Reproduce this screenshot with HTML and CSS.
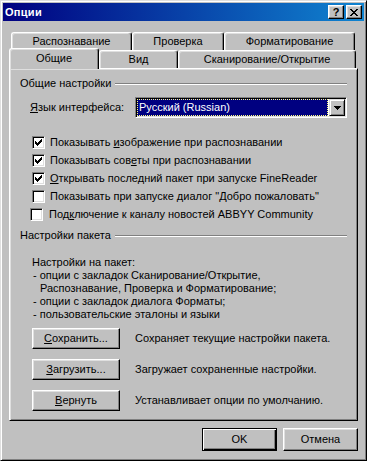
FILE: index.html
```html
<!DOCTYPE html>
<html lang="ru">
<head>
    <meta charset="UTF-8">
    <title>Опции</title>
    <link rel="stylesheet" href="styles.css">
</head>
<body>

<div class="window">
    <div class="titlebar">
        <span class="title">Опции</span>
        <div class="title-buttons">
            <span class="tbtn tbtn-help">?</span>
            <span class="tbtn">
                <svg width="8" height="7" viewBox="0 0 8 7" shape-rendering="crispEdges"><path d="M0 0h2v1h-2z M6 0h2v1h-2z M1 1h2v1h-2z M5 1h2v1h-2z M2 2h4v1h-4z M3 3h2v1h-2z M2 4h4v1h-4z M1 5h2v1h-2z M5 5h2v1h-2z M0 6h2v1h-2z M6 6h2v1h-2z" fill="#000"/></svg>
            </span>
        </div>
    </div>

    <div class="dialog-body">
        <div class="tab-row tab-row-back">
            <div class="tab tab-recog">Распознавание</div>
            <div class="tab tab-check">Проверка</div>
            <div class="tab tab-format">Форматирование</div>
        </div>
        <div class="tab-row tab-row-front">
            <div class="tab tab-general active">Общие</div>
            <div class="tab tab-view">Вид</div>
            <div class="tab tab-scan">Сканирование/Открытие</div>
        </div>

        <div class="panel">
            <div class="group-title">
                <span>Общие настройки</span>
                <span class="etched"></span>
            </div>

            <div class="lang-row">
                <span class="lang-label"><u>Я</u>зык интерфейса:</span>
                <div class="combo">
                    <span class="combo-value">Русский (Russian)</span>
                    <span class="combo-btn">
                        <svg width="7" height="4" viewBox="0 0 7 4" shape-rendering="crispEdges"><path d="M0 0h7v1h-1v1h-1v1h-1v1h-1v-1h-1v-1h-1v-1h-1z" fill="#000"/></svg>
                    </span>
                </div>
            </div>

            <div class="checks">
                <div class="check-row">
                    <span class="checkbox checked"><svg width="7" height="7" viewBox="0 0 7 7" shape-rendering="crispEdges"><path d="M0 2h1v3h-1z M1 3h1v3h-1z M2 4h1v3h-1z M3 3h1v3h-1z M4 2h1v3h-1z M5 1h1v3h-1z M6 0h1v3h-1z" fill="#000"/></svg></span>
                    <span>Показывать <u>и</u>зображение при распознавании</span>
                </div>
                <div class="check-row">
                    <span class="checkbox checked"><svg width="7" height="7" viewBox="0 0 7 7" shape-rendering="crispEdges"><path d="M0 2h1v3h-1z M1 3h1v3h-1z M2 4h1v3h-1z M3 3h1v3h-1z M4 2h1v3h-1z M5 1h1v3h-1z M6 0h1v3h-1z" fill="#000"/></svg></span>
                    <span>Показывать сов<u>е</u>ты при распознавании</span>
                </div>
                <div class="check-row">
                    <span class="checkbox checked"><svg width="7" height="7" viewBox="0 0 7 7" shape-rendering="crispEdges"><path d="M0 2h1v3h-1z M1 3h1v3h-1z M2 4h1v3h-1z M3 3h1v3h-1z M4 2h1v3h-1z M5 1h1v3h-1z M6 0h1v3h-1z" fill="#000"/></svg></span>
                    <span><u>О</u>ткрывать последний пакет при запуске FineReader</span>
                </div>
                <div class="check-row">
                    <span class="checkbox"></span>
                    <span>Показывать при запуске диалог "<u>Д</u>обро пожаловать"</span>
                </div>
                <div class="check-row check-row-shift">
                    <span class="checkbox"></span>
                    <span>Под<u>к</u>лючение к каналу новостей ABBYY Community</span>
                </div>
            </div>

            <div class="group-title group-title-2">
                <span>Настройки пакета</span>
                <span class="etched"></span>
            </div>

            <div class="note">
                <div>Настройки на пакет:</div>
                <div class="note-item">- опции с закладок Сканирование/Открытие,</div>
                <div class="note-cont">Распознавание, Проверка и Форматирование;</div>
                <div class="note-item">- опции с закладок диалога Форматы;</div>
                <div class="note-item">- пользовательские эталоны и языки</div>
            </div>

            <div class="action-row">
                <span class="btn btn-action"><u>С</u>охранить...</span>
                <span>Сохраняет текущие настройки пакета.</span>
            </div>
            <div class="action-row">
                <span class="btn btn-action"><u>З</u>агрузить...</span>
                <span>Загружает сохраненные настройки.</span>
            </div>
            <div class="action-row">
                <span class="btn btn-action"><u>В</u>ернуть</span>
                <span>Устанавливает опции по умолчанию.</span>
            </div>
        </div>

        <div class="dialog-buttons">
            <span class="btn btn-dialog btn-default">OK</span>
            <span class="btn btn-dialog">Отмена</span>
        </div>
    </div>
</div>

</body>
</html>
```
FILE: styles.css
```css
body {
    margin: 0;
    font-family: "Liberation Sans", Arial, sans-serif;
    font-size: 11px;
    line-height: 13px;
    color: #000;
    background-color: #c0c0c0;
}
u {
    text-decoration: underline;
    text-underline-offset: 1px;
}
.window {
    width: 367px;
    height: 461px;
    box-sizing: border-box;
    background-color: #c0c0c0;
    border: 1px solid;
    border-color: #dfdfdf #000 #000 #dfdfdf;
    box-shadow: inset 1px 1px #fff, inset -1px -1px #808080;
    padding: 2px;
}

/* title bar */
.titlebar {
    height: 18px;
    display: flex;
    align-items: center;
    justify-content: space-between;
    padding: 0 2px;
    background: linear-gradient(to right, #000080, #1084d0);
}
.title {
    color: #fff;
    font-weight: bold;
    letter-spacing: 0.3px;
}
.title-buttons {
    display: flex;
    gap: 2px;
}
.tbtn {
    width: 16px;
    height: 14px;
    box-sizing: border-box;
    display: flex;
    align-items: center;
    justify-content: center;
    background-color: #c0c0c0;
    border: 1px solid;
    border-color: #fff #000 #000 #fff;
    box-shadow: inset -1px -1px #808080, inset 1px 1px #dfdfdf;
}
.tbtn-help {
    font-weight: bold;
    font-size: 11px;
    line-height: 11px;
}

/* tabs */
.dialog-body {
    padding: 11px 6px 0 6px;
}
.tab-row {
    display: flex;
    height: 18px;
    align-items: flex-end;
}
.tab-row-back {
    padding-left: 2px;
}
.tab {
    height: 18px;
    box-sizing: border-box;
    display: flex;
    align-items: center;
    justify-content: center;
    background-color: #c0c0c0;
    border-top: 1px solid #fff;
    border-left: 1px solid #fff;
    border-right: 1px solid #000;
    border-radius: 3px 3px 0 0;
    box-shadow: inset -1px 0 #808080, inset 1px 1px #dfdfdf;
}
.tab-recog { width: 121px; }
.tab-check { width: 92px; }
.tab-format { width: 131px; }
.tab-general { width: 90px; }
.tab-view { width: 79px; }
.tab-scan { width: 178px; }
.tab.active {
    height: 21px;
    margin-bottom: -1px;
    position: relative;
    z-index: 1;
    padding-bottom: 2px;
}

/* panel */
.panel {
    height: 353px;
    box-sizing: border-box;
    border: 1px solid;
    border-color: #fff #000 #000 #fff;
    box-shadow: inset 1px 1px #dfdfdf, inset -1px -1px #808080;
    padding: 8px 10px 0 10px;
}
.group-title {
    display: flex;
    align-items: center;
    gap: 4px;
}
.group-title-2 {
    margin-top: 6px;
}
.etched {
    flex: 1;
    height: 0;
    border-top: 1px solid #808080;
    border-bottom: 1px solid #fff;
}
.lang-row {
    display: flex;
    align-items: center;
    margin-top: 7px;
    padding-left: 10px;
}
.lang-label {
    width: 105px;
}
.combo {
    flex: 1;
    height: 21px;
    box-sizing: border-box;
    display: flex;
    background-color: #fff;
    border: 1px solid;
    border-color: #808080 #fff #fff #808080;
    box-shadow: inset 1px 1px #000, inset -1px -1px #dfdfdf;
    padding: 1px;
}
.combo-value {
    flex: 1;
    margin-right: 1px;
    box-sizing: border-box;
    background-color: #000080;
    color: #fff;
    border: 1px dotted #ffff80;
    padding-left: 1px;
    line-height: 15px;
}
.combo-btn {
    width: 16px;
    box-sizing: border-box;
    display: flex;
    align-items: center;
    justify-content: center;
    background-color: #c0c0c0;
    border: 1px solid;
    border-color: #dfdfdf #000 #000 #dfdfdf;
    box-shadow: inset 1px 1px #fff, inset -1px -1px #808080;
}
.checks {
    margin-top: 15px;
}
.check-row {
    display: flex;
    align-items: center;
    gap: 5px;
    height: 18px;
    padding-left: 12px;
}
.check-row-shift {
    padding-left: 10px;
    gap: 6px;
}
.checkbox {
    width: 13px;
    height: 13px;
    box-sizing: border-box;
    display: flex;
    align-items: center;
    justify-content: center;
    background-color: #fff;
    border: 1px solid;
    border-color: #808080 #fff #fff #808080;
    box-shadow: inset 1px 1px #000, inset -1px -1px #dfdfdf;
}
.note {
    margin-top: 14px;
    padding-left: 12px;
}
.note-item {
    padding-left: 1px;
}
.note-cont {
    padding-left: 8px;
}
.action-row {
    display: flex;
    align-items: center;
    gap: 15px;
    padding-left: 12px;
    margin-top: 10px;
}
.note + .action-row {
    margin-top: 7px;
}

/* buttons */
.btn {
    box-sizing: border-box;
    display: flex;
    align-items: center;
    justify-content: center;
    background-color: #c0c0c0;
    border: 1px solid;
    border-color: #fff #000 #000 #fff;
    box-shadow: inset -1px -1px #808080, inset 1px 1px #dfdfdf;
}
.btn-action {
    width: 88px;
    height: 21px;
}
.dialog-buttons {
    display: flex;
    justify-content: flex-end;
    gap: 6px;
    margin-top: 7px;
}
.btn-dialog {
    width: 75px;
    height: 23px;
}
.btn-default {
    border: 1px solid #000;
    box-shadow: inset 1px 1px #fff, inset -1px -1px #000, inset -2px -2px #808080;
}
```
